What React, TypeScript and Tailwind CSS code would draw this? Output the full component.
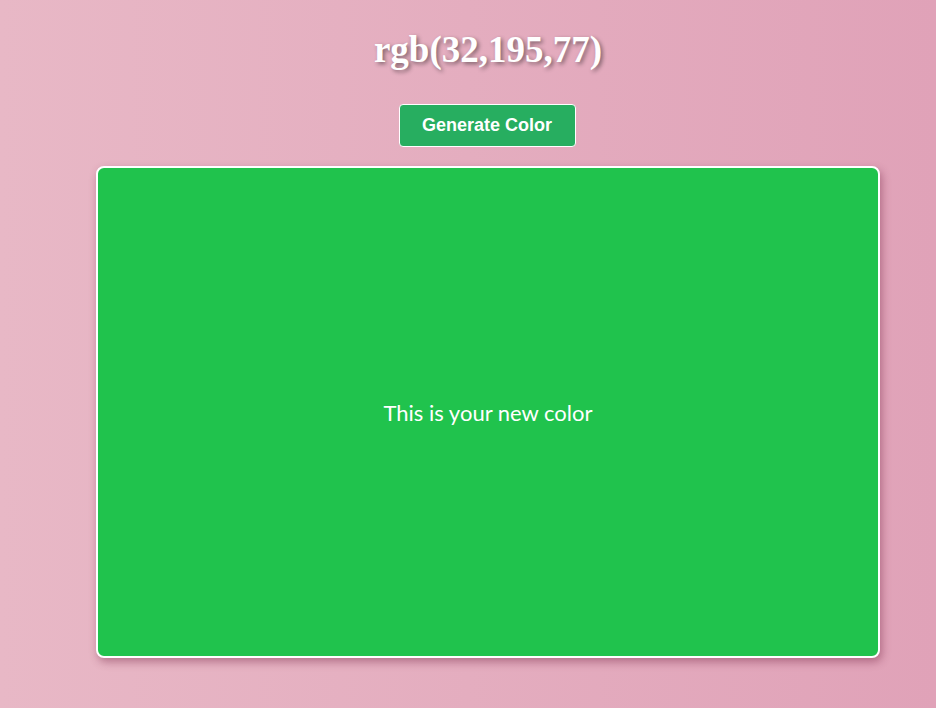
export default function App() {
  return (
    <div className="min-h-[708px] w-full bg-[linear-gradient(90deg,#e8b8c6,#e0a2b8)] overflow-hidden">
      <div className="ml-[96px] w-[784px] flex flex-col items-center">
        <h1
          className="mt-[28px] h-[44px] leading-[44px] text-[37px] font-bold text-white"
          style={{ fontFamily: '"Liberation Serif", "DejaVu Serif", serif', textShadow: "2px 2px 4px rgba(0,0,0,0.45)" }}
        >
          rgb(32,195,77)
        </h1>
        <button
          className="mt-[32px] mr-[2px] h-[43px] w-[177px] rounded-[4px] border border-white bg-[#27ae60] text-[18px] font-bold text-white"
          style={{ fontFamily: '"Liberation Sans", Arial, sans-serif' }}
        >
          Generate Color
        </button>
        <div
          className="mt-[19px] h-[492px] w-[784px] rounded-[8px] border-2 border-white bg-[#20c34d] flex items-center justify-center shadow-[2px_4px_8px_rgba(120,40,70,0.45)]"
        >
          <span className="text-[22px] text-white" style={{ fontFamily: 'Lato, "Open Sans", sans-serif' }}>
            This is your new color
          </span>
        </div>
      </div>
    </div>
  );
}
